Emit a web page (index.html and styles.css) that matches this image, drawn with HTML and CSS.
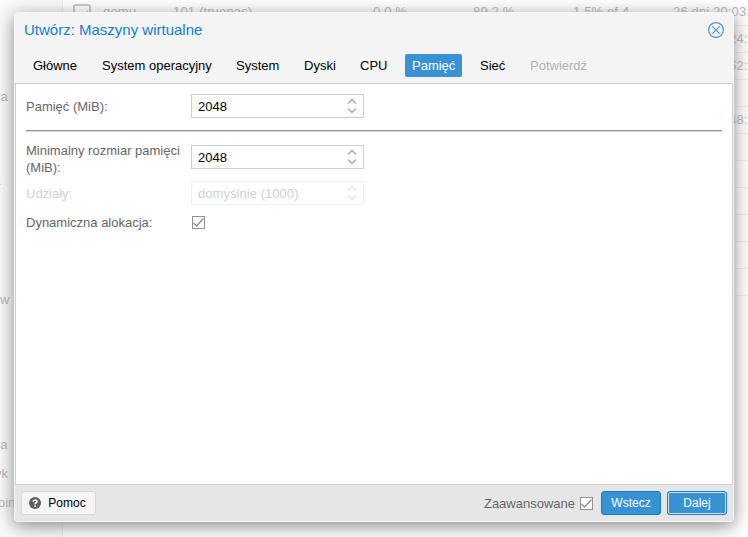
FILE: index.html
```
<!DOCTYPE html>
<html lang="pl">
<head>
<meta charset="utf-8">
<title>Utwórz: Maszyny wirtualne</title>
<link rel="stylesheet" href="styles.css">
</head>
<body>
<div class="backdrop">
  <aside class="tree">
    <span class="n1">va</span><span class="n2">.</span><span class="n3">w</span><span class="n4">ra</span><span class="n5">yk</span><span class="n6">oin</span>
  </aside>
  <div class="table">
    <div class="row"><span><svg class="monitor" width="18" height="16" viewBox="0 0 18 16"><rect x="1" y="1" width="16" height="13" rx="1.5" fill="none" stroke="#b5b5b5" stroke-width="1.6"/><path d="M15 6v3h-3z" fill="#a5d9ad"/></svg></span><span>qemu</span><span>101 (truenas)</span><span>0.0 %</span><span>89.2 %</span><span>1.5% of 4</span><span>26 dni 20:03:</span></div>
    <div class="row"><span class="time">24:</span></div>
    <div class="row"><span class="time">52:</span></div>
    <div class="row"></div>
    <div class="row"><span class="time">48:</span></div>
    <div class="row"></div><div class="row"></div><div class="row"></div><div class="row"></div><div class="row"></div><div class="row"></div>
  </div>
</div>
<section class="dialog">
  <header class="title">
    <h1>Utwórz: Maszyny wirtualne</h1>
    <svg class="close" width="16" height="16" viewBox="0 0 16 16" fill="none" stroke="#4b99d5"><circle cx="8" cy="8" r="7.4" stroke-width="1.2"/><path d="M4.3 4.3l7.4 7.4M11.7 4.3l-7.4 7.4" stroke-width="1.1"/></svg>
  </header>
  <nav class="tabs">
    <span>Główne</span><span>System operacyjny</span><span>System</span><span>Dyski</span><span>CPU</span><span class="active">Pamięć</span><span>Sieć</span><span class="off">Potwierdź</span>
  </nav>
  <main class="panel">
    <div class="field"><label>Pamięć (MiB):</label><div class="input">2048<svg width="10" height="16" viewBox="0 0 10 16"><path d="M1 5.5l4-4 4 4M1 10.5l4 4 4-4"/></svg></div></div>
    <div class="rule"></div>
    <div class="field tall"><label>Minimalny rozmiar pamięci (MiB):</label><div class="input">2048<svg width="10" height="16" viewBox="0 0 10 16"><path d="M1 5.5l4-4 4 4M1 10.5l4 4 4-4"/></svg></div></div>
    <div class="field disabled"><label>Udziały:</label><div class="input">domyślnie (1000)<svg width="10" height="16" viewBox="0 0 10 16"><path d="M1 5.5l4-4 4 4M1 10.5l4 4 4-4"/></svg></div></div>
    <div class="field last"><label>Dynamiczna alokacja:</label><svg class="check" width="13" height="13" viewBox="0 0 13 13"><rect x=".5" y=".5" width="12" height="12"/><path d="M1.5 7l3 3L11.5 2.5"/></svg></div>
  </main>
  <footer class="bar">
    <div class="btn help"><svg width="12" height="12" viewBox="0 0 12 12"><circle cx="6" cy="6" r="6" fill="#606060"/><path d="M4.1 4.6C4.2 2.5 8 2.4 8 4.4 8 5.8 6.1 5.7 6.1 7.3M6.1 8.2v1.6" fill="none" stroke="#fff" stroke-width="1.6"/></svg><span>Pomoc</span></div>
    <span class="advanced">Zaawansowane</span>
    <svg class="check" width="13" height="13" viewBox="0 0 13 13"><rect x=".5" y=".5" width="12" height="12"/><path d="M1.5 7l3 3L11.5 2.5"/></svg>
    <div class="btn primary back">Wstecz</div>
    <div class="btn primary focus">Dalej</div>
  </footer>
</section>
</body>
</html>
```
FILE: styles.css
```
* { box-sizing: border-box; }
body {
  margin: 0;
  width: 748px;
  height: 537px;
  overflow: hidden;
  position: relative;
  background: #fff;
  font: 13px/17px "Liberation Sans", Arial, sans-serif;
  color: #666;
}
.backdrop { display: grid; grid-template-columns: 63px 1fr; height: 537px; color: #b3b3b3; }
.tree { display: flex; flex-direction: column; background: #fafafa; border-right: 1px solid #ececec; overflow: hidden; }
.tree span { height: 17px; }
.n1 { margin: 88px 0 0 -6px; }
.n2 { margin: 67px 0 0 -2px; }
.n3 { margin: 102px 0 0; }
.n4 { margin: 128px 0 0 -4px; }
.n5 { margin: 12px 0 0 -5px; }
.n6 { margin: 12px 0 0 -2px; }
.table { overflow: hidden; }
.row {
  display: grid;
  grid-template-columns: 40px 70px 200px 100px 100px 100px 1fr;
  height: 27px;
  border-bottom: 1px solid #ededed;
  padding-top: 4px;
  white-space: nowrap;
  letter-spacing: .15px;
}
.row:first-child { height: 26px; padding-top: 3px; }
.monitor { display: block; margin: 1px 0 0 10px; }
.time { grid-column: 7; padding-left: 56px; }
.dialog {
  position: absolute;
  left: 14px;
  top: 12px;
  width: 720px;
  height: 510px;
  display: flex;
  flex-direction: column;
  border: 1px solid #f5f5f5;
  border-radius: 4px;
  background: #f4f4f4;
  box-shadow: 0 4px 18px #888;
}
.title { height: 36px; display: flex; justify-content: space-between; padding: 8px 9px 0 9px; }
h1 { margin: 0; font-size: 15px; line-height: 18px; font-weight: 400; color: #157fcc; }
.close { margin-top: 1px; }
.tabs {
  height: 34px;
  display: grid;
  grid-template-columns: 58px 123px 57px 45px 41px 57px 39px 71px;
  gap: 11px;
  padding: 5px 0 6px 11px;
  color: #000;
  line-height: 23px;
  white-space: nowrap;
}
.tabs span { padding-left: 7px; }
.tabs .active { background: #3892d4; color: #fff; border-radius: 2px; }
.tabs .off { color: #b1b1b1; }
.panel { height: 402px; background: #fff; border: 1px solid #cfcfcf; padding: 10px; }
.field { display: flex; height: 24px; }
.field label { width: 165px; padding-top: 4px; }
.input {
  width: 173px;
  height: 24px;
  border: 1px solid #cfcfcf;
  padding: 0 6px;
  display: flex;
  justify-content: space-between;
  align-items: center;
  color: #000;
  background: #fff;
}
.input svg { fill: none; stroke: #aaa; stroke-width: 1.4; }
.rule { height: 2px; margin: 12px 0 13px; border-top: 1px solid #929292; border-bottom: 1px solid #ddd; }
.tall { height: 36px; }
.tall label { padding-top: 0; margin-top: -3px; }
.disabled { opacity: .3; }
.disabled .input { color: #606060; letter-spacing: .05px; }
.last { margin-top: 5px; }
.check { display: block; fill: #fff; stroke: #919191; flex: none; }
.check path { fill: none; stroke-width: 1.4; }
.last .check { margin: 6px 0 0 1px; }
.bar { flex: 1; display: flex; align-items: center; padding: 0 6px; background: #e6e6e6; border-radius: 0 0 3px 3px; }
.btn { height: 24px; border: 1px solid #d8d8d8; border-radius: 3px; display: flex; align-items: center; justify-content: center; font-size: 12px; }
.help { width: 75px; padding-right: 2px; background: #f5f5f5; color: #000; gap: 7px; }
.advanced { margin-left: auto; margin-right: 5px; }
.primary { width: 60px; background: #3892d4; border-color: #157fcc; color: #fff; }
.back { margin: 0 6px 0 8px; }
.focus { box-shadow: inset 0 0 0 1px #d5e8f6; }
```
